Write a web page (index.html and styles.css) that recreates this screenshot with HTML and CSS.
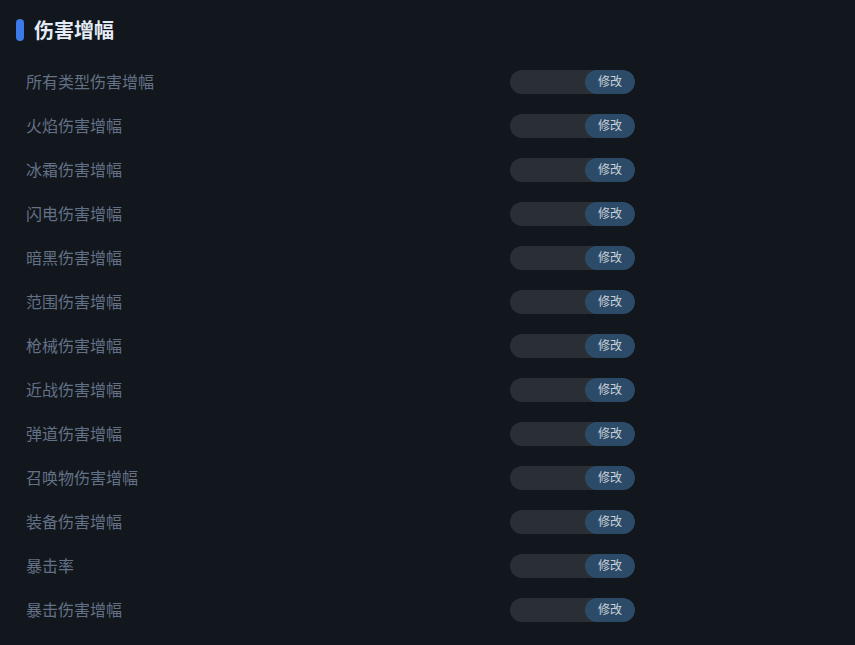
FILE: index.html
```html
<!DOCTYPE HTML>
<html>
<head>
    <title>伤害增幅</title>
    <meta name="viewport" content="width=device-width, initial-scale=1">
    <link rel="stylesheet" href="styles.css">
</head>
<body>
    <div class="panel">
        <h2 class="title">伤害增幅</h2>

        <div class="rows">
            <div class="row"><label>所有类型伤害增幅</label><div class="field"><input type="text"><button>修改</button></div></div>
            <div class="row"><label>火焰伤害增幅</label><div class="field"><input type="text"><button>修改</button></div></div>
            <div class="row"><label>冰霜伤害增幅</label><div class="field"><input type="text"><button>修改</button></div></div>
            <div class="row"><label>闪电伤害增幅</label><div class="field"><input type="text"><button>修改</button></div></div>
            <div class="row"><label>暗黑伤害增幅</label><div class="field"><input type="text"><button>修改</button></div></div>
            <div class="row"><label>范围伤害增幅</label><div class="field"><input type="text"><button>修改</button></div></div>
            <div class="row"><label>枪械伤害增幅</label><div class="field"><input type="text"><button>修改</button></div></div>
            <div class="row"><label>近战伤害增幅</label><div class="field"><input type="text"><button>修改</button></div></div>
            <div class="row"><label>弹道伤害增幅</label><div class="field"><input type="text"><button>修改</button></div></div>
            <div class="row"><label>召唤物伤害增幅</label><div class="field"><input type="text"><button>修改</button></div></div>
            <div class="row"><label>装备伤害增幅</label><div class="field"><input type="text"><button>修改</button></div></div>
            <div class="row"><label>暴击率</label><div class="field"><input type="text"><button>修改</button></div></div>
            <div class="row"><label>暴击伤害增幅</label><div class="field"><input type="text"><button>修改</button></div></div>
        </div>
    </div>
</body>
</html>
```

FILE: styles.css
```css
html {background: #12161d;}
body {margin: 0; font-family: "Noto Sans CJK SC", "Noto Sans", sans-serif; color: #c9d1d9;}
.panel {padding: 18px 16px 0 16px;}
.title {display: flex; align-items: center; gap: 10px; margin: 0; font-size: 20px; font-weight: 700; color: #e3ebf5; height: 24px; line-height: 24px;}
.title:before {content: ""; width: 8px; height: 22px; border-radius: 4px; background: #3b7ae8;}
.rows {padding: 18px 0 0 10px;}
.row {display: flex; align-items: center; height: 44px;}
.row label {width: 484px; font-size: 16px; line-height: 22px; padding-bottom: 2px; color: #637185;}
.field {display: flex; width: 125px; height: 24px; border-radius: 12px; background: #2a2e35; overflow: hidden;}
.field input {flex: 1; min-width: 0; border: 0; background: transparent; outline: none; color: #c9d1d9; padding: 0 10px;}
.field button {width: 50px; border: 0; border-radius: 12px; background: #2c4b68; color: #c9d1d9; font-family: inherit; font-size: 12px; line-height: 16px; padding: 0 0 2px 0; cursor: pointer;}
```
